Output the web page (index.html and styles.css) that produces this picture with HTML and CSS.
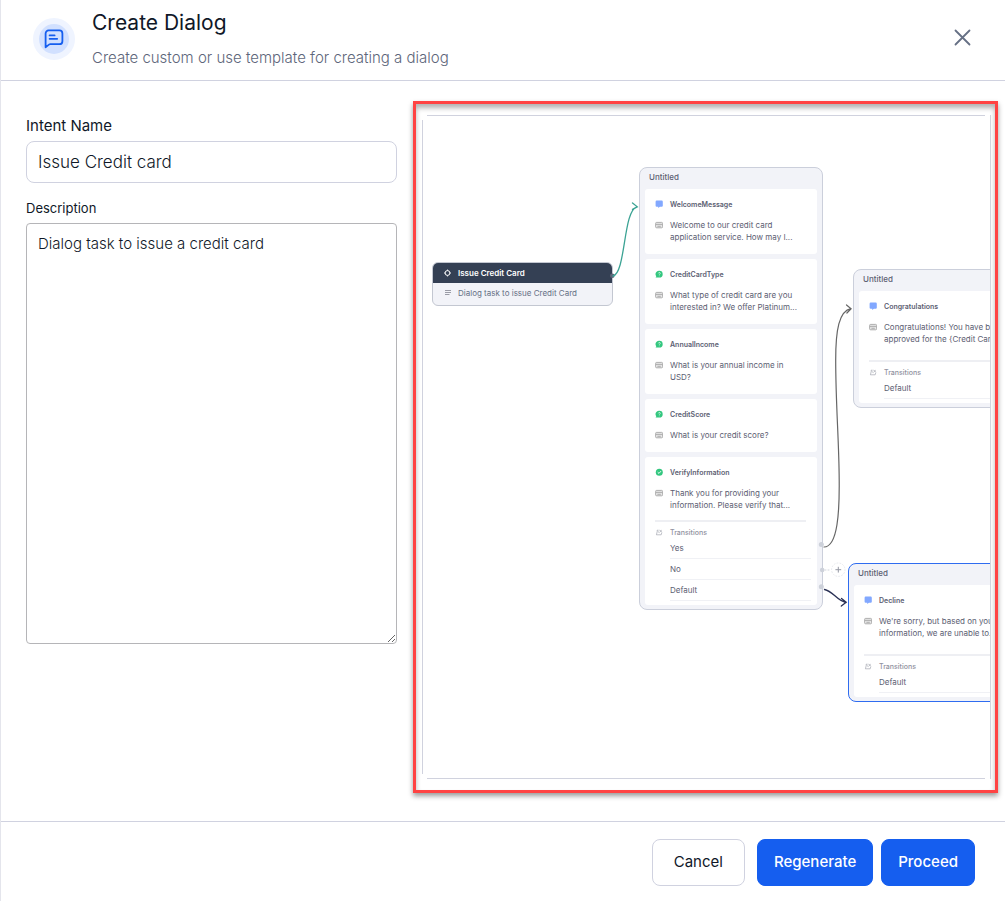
FILE: index.html
```html
<!DOCTYPE html>
<html lang="en">
<head>
<meta charset="utf-8">
<title>Create Dialog</title>
<link rel="stylesheet" href="styles.css">
</head>
<body>
<svg class="sprite" aria-hidden="true">
  <symbol id="message" viewBox="0 0 8 9"><path d="M1.7 .6h5a1.1 1.1 0 0 1 1.1 1.1v4a1.1 1.1 0 0 1-1.1 1.1H4.9L3.2 8V6.8H1.7A1.1 1.1 0 0 1 .6 5.7v-4A1.1 1.1 0 0 1 1.7 .6z" fill="#82a8ff"/></symbol>
  <symbol id="question" viewBox="0 0 8 9"><path d="M4.3.8a3.4 3.4 0 1 1 0 6.8H.6l.7-1.3A3.4 3.4 0 0 1 4.3.8z" fill="#33c77f"/><path d="M3.4 3.3c.1-1.1 1.9-1.1 1.9 0 0 .7-1 .7-1 1.4M4.3 5.6v.6" fill="none" stroke="#fff" stroke-width=".7"/></symbol>
  <symbol id="check" viewBox="0 0 8 9"><circle cx="4.3" cy="4.2" r="3.5" fill="#33c77f"/><path d="M2.7 4.2 4 5.4l2-2.3" fill="none" stroke="#fff" stroke-width=".9"/></symbol>
  <symbol id="keyboard" viewBox="0 0 8 9"><rect x=".6" y="1.4" width="7" height="5.4" rx="1" fill="#e6e6e6" stroke="#a6a6a6" stroke-width=".9"/><path d="M1 3.4h6.2M2.4 5.3h3.4" stroke="#a0a0a0" stroke-width=".8"/></symbol>
  <symbol id="transition" viewBox="0 0 8 9"><path d="M3.6 2.2H2.2v1.5L1.4 6.8h4.8l.5-1.9M4.2 4.6 2.6 3.2M4.4 2.2l1.4.6 1.1 1.8M4.4 4.4l2.3-2.2" fill="none" stroke="#a3a6b0" stroke-width=".7"/></symbol>
</svg>
<div class="dialog">
  <header class="head">
    <span class="badge">
      <svg width="20" height="20" viewBox="0 0 20 20" fill="none" stroke="#155eef" stroke-width="1.8" stroke-linecap="round" stroke-linejoin="round"><path d="M1.6 18.2V4.4a3 3 0 0 1 3-3h10.8a3 3 0 0 1 3 3v7.8a3 3 0 0 1-3 3H6.2c-1.4 0-2.6 1.8-4.6 3zM5.6 6.4h5M5.6 9.8h7.6"/></svg>
    </span>
    <div class="headings">
      <h1>Create Dialog</h1>
      <p>Create custom or use template for creating a dialog</p>
    </div>
    <button class="close" type="button" aria-label="Close">
      <svg width="17" height="17" viewBox="0 0 17 17" stroke="#667085" stroke-width="1.8" stroke-linecap="round"><path d="M1.5 1.5l14 14M15.5 1.5l-14 14"/></svg>
    </button>
  </header>

  <main class="body">
    <form class="form" id="dialog-form">
      <label class="label-name" for="intent">Intent Name</label>
      <input id="intent" type="text" value="Issue Credit card">
      <label class="label-description" for="description">Description</label>
      <textarea id="description">Dialog task to issue a credit card</textarea>
    </form>

    <section class="frame">
      <div class="canvas">
        <article class="start">
          <h2><svg width="8" height="8" viewBox="0 0 8 8" fill="none" stroke="#fff"><circle cx="3.5" cy="4" r="2.4"/><path d="M3.5 .6v1M3.5 6.4v1M.2 4h.8M6 4h.8"/></svg>Issue Credit Card</h2>
          <p><svg width="8" height="8" viewBox="0 0 8 8" stroke="#9a9ca6"><path d="M1 1.5h6M1 3.5h6M1 5.5h4.5"/></svg>Dialog task to issue Credit Card</p>
        </article>

        <article class="node node-main">
          <h2>Untitled</h2>
          <section class="card">
            <svg class="icon"><use href="#message"/></svg><h3>WelcomeMessage</h3>
            <svg class="icon icon-text"><use href="#keyboard"/></svg><p>Welcome to our credit card<br>application service. How may I...</p>
          </section>
          <section class="card">
            <svg class="icon"><use href="#question"/></svg><h3>CreditCardType</h3>
            <svg class="icon icon-text"><use href="#keyboard"/></svg><p>What type of credit card are you<br>interested in? We offer Platinum...</p>
          </section>
          <section class="card">
            <svg class="icon"><use href="#question"/></svg><h3>AnnualIncome</h3>
            <svg class="icon icon-text"><use href="#keyboard"/></svg><p>What is your annual income in<br>USD?</p>
          </section>
          <section class="card">
            <svg class="icon"><use href="#question"/></svg><h3>CreditScore</h3>
            <svg class="icon icon-text"><use href="#keyboard"/></svg><p>What is your credit score?</p>
          </section>
          <section class="card card-last">
            <svg class="icon"><use href="#check"/></svg><h3>VerifyInformation</h3>
            <svg class="icon icon-text"><use href="#keyboard"/></svg><p>Thank you for providing your<br>information. Please verify that...</p>
            <div class="rule"></div>
            <svg class="icon"><use href="#transition"/></svg><h4>Transitions</h4>
            <ul><li>Yes</li><li>No</li><li>Default</li></ul>
          </section>
        </article>

        <article class="node node-approved">
          <h2>Untitled</h2>
          <section class="card card-last card-spaced">
            <svg class="icon"><use href="#message"/></svg><h3>Congratulations</h3>
            <svg class="icon icon-text"><use href="#keyboard"/></svg><p>Congratulations! You have been<br>approved for the {Credit Card...</p>
            <div class="rule"></div>
            <svg class="icon"><use href="#transition"/></svg><h4>Transitions</h4>
            <ul><li>Default</li></ul>
          </section>
        </article>

        <article class="node node-declined">
          <h2>Untitled</h2>
          <section class="card card-last card-spaced">
            <svg class="icon"><use href="#message"/></svg><h3>Decline</h3>
            <svg class="icon icon-text"><use href="#keyboard"/></svg><p>We're sorry, but based on your<br>information, we are unable to...</p>
            <div class="rule"></div>
            <svg class="icon"><use href="#transition"/></svg><h4>Transitions</h4>
            <ul><li>Default</li></ul>
          </section>
        </article>

        <svg class="edges" width="569" height="664" viewBox="422 115 569 664" fill="none" stroke-linecap="round">
          <circle cx="612.3" cy="275.7" r="2.3" fill="#5d6478"/>
          <path d="M613 276C626 273 623 210 637 206.8M632.5 203l4.8 3.8-4.8 2.6" stroke="#3ba394" stroke-width="1.3"/>
          <path d="M824 547C838 547 839.5 510 839.2 480 839 440 835.7 405 835.7 360 835.7 330 839 311 851 308.7M846.5 305l4.6 3.7-4.2 4.3" stroke="#666" stroke-width="1.2"/>
          <path d="M824.5 589.5C833 591 837 601 846 602.5M841.5 598.5l4.7 3.8-4.9 3.8" stroke="#2a3155" stroke-width="1.3"/>
          <g fill="#cdd1da"><circle cx="821.3" cy="544.5" r="2.5"/><circle cx="822.2" cy="570" r="2.3"/><circle cx="821.3" cy="586.8" r="2.5"/></g>
          <path d="M825 570h6" stroke="#d0d3dc" stroke-dasharray="1 2"/>
          <circle cx="838.3" cy="569.7" r="6.7" fill="#fff" stroke="#e1e3e9" stroke-width=".8" stroke-dasharray="1 2"/>
          <path d="M835.8 569.7h5M838.3 567.2v5" stroke="#9498a3"/>
        </svg>
      </div>
    </section>
  </main>

  <footer class="foot">
    <button class="btn cancel" type="button">Cancel</button>
    <button class="btn primary" type="button">Regenerate</button>
    <button class="btn primary" type="submit" form="dialog-form">Proceed</button>
  </footer>
</div>
</body>
</html>
```
FILE: styles.css
```css
* { box-sizing: border-box; }
body { margin: 0; font-family: Inter, "Liberation Sans", sans-serif; color: #101828; background: #fff; }
h1, h2, h3, h4, p, ul { margin: 0; padding: 0; }
ul { list-style: none; }
svg { display: block; flex: none; }
.sprite { display: none; }

.dialog { display: flex; flex-direction: column; min-height: 100vh; border-left: 1px solid #e4e5ec; }

.head { display: flex; align-items: flex-start; height: 81px; padding: 0 34px 0 32px; border-bottom: 1px solid #d0d2e0; }
.badge { display: flex; align-items: center; justify-content: center; width: 42px; height: 42px; margin-top: 18px; border: 6px solid #eff4ff; border-radius: 50%; background: #d1e0ff; }
.headings { flex: 1; margin-left: 17px; padding-top: 10px; }
.headings h1 { font-size: 21px; line-height: 26px; font-weight: 400; }
.headings p { margin-top: 12px; font-size: 15px; line-height: 20px; font-weight: 300; color: #5d667a; }
.close { margin-top: 29px; padding: 0; border: 0; background: none; }

.body { flex: 1; display: grid; grid-template-columns: 371fr 585fr; gap: 16px; padding: 20px 7px 28px 25px; }
.form { display: flex; flex-direction: column; }
.label-name { margin-top: 15px; font-size: 15px; line-height: 20px; margin-bottom: 5px; }
.label-description { margin-top: 16px; font-size: 13px; line-height: 18px; margin-bottom: 6px; }
input, textarea { width: 100%; font-family: inherit; font-weight: 300; color: #101828; background: #fff; }
input { height: 42px; padding: 0 11px; border: 1px solid #d0d2e0; border-radius: 8px; font-size: 17px; }
textarea { display: block; height: 421px; padding: 10px 11px; border: 1px solid #b5b5b8; border-radius: 4px; font-size: 15px; line-height: 20px; resize: vertical; }

.frame { min-width: 0; display: flex; padding: 11px 4px 11px 6px; border: 3px solid #ff4343; box-shadow: 0 3px 5px rgba(0,0,0,.4), inset 0 4px 5px rgba(0,0,0,.3); }
.canvas {
  position: relative; flex: 1; min-height: 664px; overflow: hidden;
  border-right: 1px solid #d0d4de;
  background:
    linear-gradient(#d0d2de, #d0d2de) center top / calc(100% - 10px) 1px no-repeat,
    linear-gradient(#d0d2de, #d0d2de) center bottom / calc(100% - 10px) 1px no-repeat,
    linear-gradient(#d0d2de, #d0d2de) left center / 1px calc(100% - 10px) no-repeat;
}
.edges { position: absolute; left: 0; top: 0; }

.start { position: absolute; left: 10px; top: 147px; width: 181px; border: 1px solid #c3c7d1; border-radius: 6px; overflow: hidden; background: #f2f3f8; font-size: 8px; }
.start h2, .start p { display: flex; align-items: center; gap: 6px; padding-left: 11px; font-size: 8px; white-space: nowrap; }
.start h2 { height: 20px; background: #344054; color: #fff; font-weight: 600; }
.start p { height: 22px; padding-bottom: 2px; color: #667085; }

.node { position: absolute; width: 184px; padding: 0 5px 4px; border: 1px solid #cbcfdb; border-radius: 8px; background: #f2f3f8; font-size: 8px; color: #5c6072; display: flex; flex-direction: column; gap: 5px; }
.node-main { left: 217px; top: 52px; }
.node-approved { left: 431px; top: 154px; }
.node-declined { left: 426px; top: 448px; border-color: #2f6cf0; }
.node h2 { height: 16px; padding-left: 4px; font-size: 8px; line-height: 19px; font-weight: 500; }
.card { display: grid; grid-template-columns: 15px 1fr; padding: 11px 11px 11px 10px; border-radius: 3px; background: #fff; white-space: nowrap; }
.card-last { padding-bottom: 4px; }
.icon { width: 8px; height: 9px; }
.icon-text { margin-top: 2px; }
.card h3 { margin-bottom: 9px; font-size: 7px; line-height: 10px; font-weight: 600; }
.card p { line-height: 12px; }
.rule { grid-column: 1 / -1; height: 2px; margin: 9px 0 6px; background: #eeeff3; }
.card-spaced .rule { margin-top: 15px; }
.card h4 { font-size: 7px; line-height: 10px; font-weight: 500; color: #9092a0; }
.card ul { grid-column: 2; margin: 0 -5px 0 0; }
.card li { height: 21px; line-height: 20px; border-bottom: 1px solid #f0f1f5; }

.foot { display: flex; justify-content: flex-end; gap: 8px; height: 80px; padding: 17px 30px 15px; border-top: 1px solid #d0d2e0; }
.btn { height: 47px; padding: 0 16px 2px; border: 1px solid #155eef; border-radius: 8px; font-family: inherit; font-size: 15px; font-weight: 500; }
.primary { background: #155eef; color: #fff; }
.cancel { margin-right: 4px; padding: 0 21px 2px; border-color: #d0d2e0; background: #fff; color: #101828; font-weight: 400; }
```
